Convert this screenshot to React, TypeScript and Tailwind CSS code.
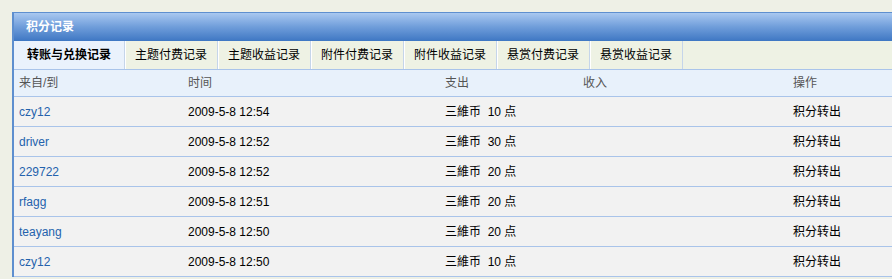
import React from "react";

const tabs = ["转账与兑换记录", "主题付费记录", "主题收益记录", "附件付费记录", "附件收益记录", "悬赏付费记录", "悬赏收益记录"];

const rows = [
  { who: "czy12", time: "2009-5-8 12:54", amt: "10" },
  { who: "driver", time: "2009-5-8 12:52", amt: "30" },
  { who: "229722", time: "2009-5-8 12:52", amt: "20" },
  { who: "rfagg", time: "2009-5-8 12:51", amt: "20" },
  { who: "teayang", time: "2009-5-8 12:50", amt: "20" },
  { who: "czy12", time: "2009-5-8 12:50", amt: "10" },
];

const cols = "grid grid-cols-[169px_257px_138px_210px_1fr]";

export default function App() {
  return (
    <div
      className="w-[892px] h-[279px] overflow-hidden bg-[#eef0e6] pt-[12px] pl-[12px] text-[12px]"
      style={{ fontFamily: '"Liberation Sans", "Noto Sans CJK SC", sans-serif' }}
    >
      <div className="border-l-2 border-t border-[#5e8fcf] bg-[#f2f2f2]">
        <div className="h-[28px] flex items-center pl-[12px] bg-gradient-to-b from-[#a9c8f0] via-[#6f9dda] to-[#3e77c3] text-white font-bold text-[12px]">
          积分记录
        </div>
        <div className="flex h-[28px] bg-[#eef2e4]">
          {tabs.map((t, i) => (
            <div
              key={t}
              className={
                i === 0
                  ? "w-[111px] flex items-center justify-center font-bold text-black bg-[#eaf2fc] border-r border-[#c5d5ea]"
                  : "w-[93px] flex items-center justify-center text-black border-r border-[#c5d5ea] shadow-[inset_1px_0_0_#ffffff]"
              }
            >
              {t}
            </div>
          ))}
        </div>
        <div className={`${cols} h-[28px] items-center bg-[#e8f1fb] border-t border-b border-[#a9c4ea] text-[#555]`}>
          <div className="pl-[5px]">来自/到</div>
          <div className="pl-[5px]">时间</div>
          <div className="pl-[5px]">支出</div>
          <div className="pl-[5px]">收入</div>
          <div className="pl-[5px]">操作</div>
        </div>
        {rows.map((r, i) => (
          <div key={i} className={`${cols} h-[30px] items-center border-b border-[#a9c4ea] bg-[#f2f2f2] text-black`}>
            <div className="pl-[5px] text-[#2462ad]">{r.who}</div>
            <div className="pl-[5px]">{r.time}</div>
            <div className="pl-[5px]">三維币&nbsp; {r.amt} 点</div>
            <div className="pl-[5px]"></div>
            <div className="pl-[5px]">积分转出</div>
          </div>
        ))}
      </div>
    </div>
  );
}
